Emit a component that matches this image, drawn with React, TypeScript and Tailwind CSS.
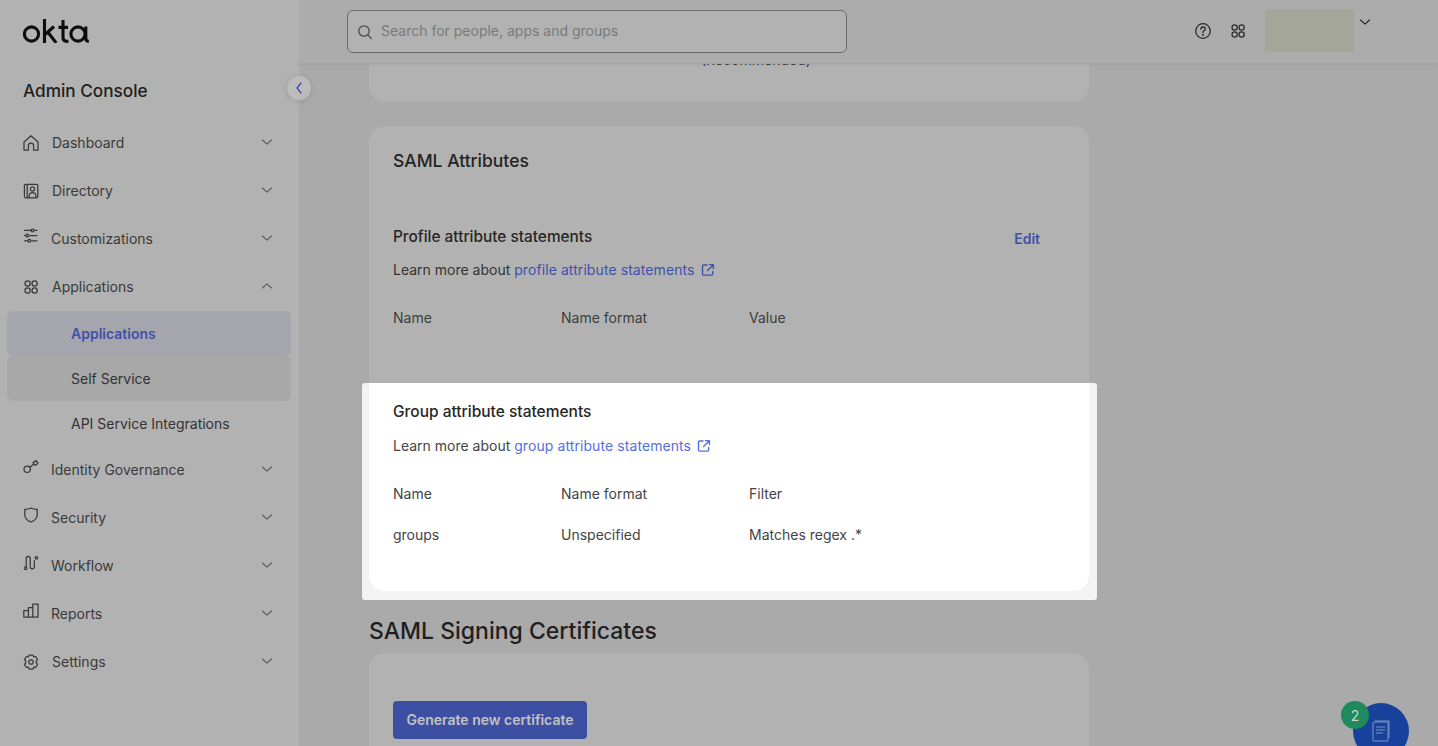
import React from "react";

const I = ({ children, className = "" }: { children: React.ReactNode; className?: string }) => (
  <svg viewBox="0 0 16 16" fill="none" stroke="currentColor" strokeWidth="1.25" strokeLinecap="round" strokeLinejoin="round" className={`w-4 h-4 shrink-0 ${className}`}>
    {children}
  </svg>
);

const Chevron = ({ up = false, className = "" }: { up?: boolean; className?: string }) => (
  <svg viewBox="0 0 12 8" fill="none" stroke="currentColor" strokeWidth="1.1" strokeLinecap="round" strokeLinejoin="round" className={`w-[12px] h-[8px] ${className}`}>
    <path d={up ? "M1.5 6 L6 1.8 L10.5 6" : "M1.5 2 L6 6.2 L10.5 2"} />
  </svg>
);

const FourCircles = ({ className = "" }: { className?: string }) => (
  <I className={className}>
    <circle cx="4.6" cy="4.4" r="2.6" />
    <circle cx="11.6" cy="4.4" r="2.6" />
    <circle cx="4.6" cy="11.4" r="2.6" />
    <circle cx="11.6" cy="11.4" r="2.6" />
  </I>
);

const Ext = ({ className = "" }: { className?: string }) => (
  <svg viewBox="0 0 14 14" fill="none" stroke="currentColor" strokeWidth="1.4" strokeLinecap="round" strokeLinejoin="round" className={`w-[14px] h-[14px] ${className}`}>
    <path d="M6 2 H2.6 Q1.5 2 1.5 3.1 V11 Q1.5 12.1 2.6 12.1 H10.6 Q11.7 12.1 11.7 11 V8.4" />
    <path d="M8.4 1.6 H12.4 V5.6 M12.2 1.8 L6.6 7.4" />
  </svg>
);

const items: { label: string; icon: React.ReactNode; up?: boolean; textClass: string }[] = [
  {
    label: "Dashboard",
    textClass: "ml-[13px]",
    icon: (
      <I>
        <path d="M1 7 L8 0.8 L15 7 V15 H10.6 V10.6 Q10.6 8 8 8 Q5.4 8 5.4 10.6 V15 H1 Z" />
      </I>
    ),
  },
  {
    label: "Directory",
    textClass: "ml-[13px]",
    icon: (
      <I>
        <rect x="1.4" y="1.4" width="13.4" height="13.4" rx="1.2" />
        <path d="M4.2 1.6 V14.6" />
        <circle cx="9.5" cy="6" r="2.1" />
        <path d="M6.2 14.4 V12.6 Q6.2 9.6 9.5 9.6 Q12.8 9.6 12.8 12.6 V14.4" />
      </I>
    ),
  },
  {
    label: "Customizations",
    textClass: "ml-[12px]",
    icon: (
      <I className="-translate-y-[3px]">
        <path d="M10.8 2.4 H14 M1.6 2.4 H8 M1.6 7.6 H2.8 M5.6 7.6 H14 M8.8 12.8 H14 M1.6 12.8 H5" />
        <circle cx="9.4" cy="2.4" r="1.4" />
        <circle cx="4.2" cy="7.6" r="1.4" />
        <circle cx="6.4" cy="12.8" r="1.4" />
      </I>
    ),
  },
  { label: "Applications", up: true, textClass: "ml-[13px]", icon: <FourCircles /> },
  {
    label: "Identity Governance",
    textClass: "ml-[12px]",
    icon: (
      <I className="-translate-y-[3px]">
        <circle cx="4.2" cy="10.2" r="3.2" />
        <path d="M6.8 8.2 L10.6 5.2 M10 3.6 L13.2 1.6 L15 4.2 L12 6.4 Z" />
      </I>
    ),
  },
  {
    label: "Security",
    textClass: "ml-[12px]",
    icon: (
      <I className="-translate-y-[3px]">
        <path d="M8 1 Q11 2.6 14.2 2.4 V8 Q14.2 12.6 8 15 Q1.8 12.6 1.8 8 V2.4 Q5 2.6 8 1 Z" />
      </I>
    ),
  },
  {
    label: "Workflow",
    textClass: "ml-[12px]",
    icon: (
      <I className="-translate-y-[3px]">
        <circle cx="2.6" cy="13.2" r="1.3" />
        <circle cx="13.4" cy="2.8" r="1.3" />
        <path d="M3.2 11.4 V4 Q3.2 1.4 5.2 1.4 Q7.2 1.4 7.2 4 V11.4 Q7.2 13.8 9.2 13.8 Q11.4 13.8 11.4 11.4 V5.6" />
      </I>
    ),
  },
  {
    label: "Reports",
    textClass: "ml-[12px]",
    icon: (
      <I className="-translate-y-[3px]">
        <path d="M0.8 7.6 H5.4 V14 H0.8 Z M5.4 4.6 H9.8 V14 H5.4 Z M9.8 1 H15 V14 H9.8 Z" />
      </I>
    ),
  },
  {
    label: "Settings",
    textClass: "ml-[13px]",
    icon: (
      <I>
        <circle cx="8" cy="8" r="2.2" />
        <path d="M6.2 1 H9.8 L10.6 2.8 L12.6 2.5 L14.6 5.6 L13.3 7.1 V8.9 L14.6 10.4 L12.6 13.5 L10.6 13.2 L9.8 15 H6.2 L5.4 13.2 L3.4 13.5 L1.4 10.4 L2.7 8.9 V7.1 L1.4 5.6 L3.4 2.5 L5.4 2.8 Z" />
      </I>
    ),
  },
];

const Row = ({ item }: { item: (typeof items)[number] }) => (
  <div className="h-[48px] flex items-center pl-[23px] pr-[26px] text-[#3a3a3a]">
    {item.icon}
    <span className={`${item.textClass} pb-[2px] flex-1 text-[14px]`}>{item.label}</span>
    <Chevron up={item.up} className="text-[#5c5c5c] -translate-y-[1px]" />
  </div>
);

const Sidebar = () => (
  <aside className="w-[299px] shrink-0 h-full bg-[#b2b2b2] flex flex-col relative z-20">
    <div className="pl-[23px] pt-[19px] h-[72px]">
      <svg viewBox="0 0 66 24" className="w-[66px] h-[24px]" fill="none" stroke="#0d0d0d" strokeWidth="3.1">
        <circle cx="8.5" cy="15" r="7.1" />
        <path d="M21.5 0 V24 M22 15.5 L31 7.5 M25 13.2 L33.2 24" />
        <path d="M40 1 V18.5 Q40 22.4 44 22.4 H45.4 M35.5 8.4 H45" />
        <circle cx="55" cy="15" r="7.1" />
        <path d="M62.8 7.4 V19.6 Q62.8 22.4 65.8 22.4" />
      </svg>
    </div>
    <div className="pl-[23px] h-[38px] flex items-center text-[17.2px] font-medium text-[#1f1f1f] leading-none">Admin Console</div>
    <div className="mt-[9px]">
      {items.slice(0, 4).map((it) => <Row key={it.label} item={it} />)}
    </div>
    <div className="pl-[7px]">
      <div className="w-[284px] h-[45px] rounded-[6px] bg-[#a5a5ad] pl-[64px] flex items-center text-[14px] font-semibold text-[#3f51ab]">Applications</div>
      <div className="w-[284px] h-[45px] rounded-[6px] bg-[#a8a8a8] pl-[64px] flex items-center text-[14px] text-[#333333]">Self Service</div>
      <div className="h-[45px] pl-[64px] flex items-center text-[14px] text-[#333333]">API Service Integrations</div>
    </div>
    <div>
      {items.slice(4).map((it) => <Row key={it.label} item={it} />)}
    </div>
    <button className="absolute left-[287px] top-[76px] w-[24px] h-[24px] rounded-full bg-[#bcbcbc] shadow-[0_1px_6px_rgba(0,0,0,0.12)] flex items-center justify-center text-[#3f51ab]">
      <svg viewBox="0 0 8 12" fill="none" stroke="currentColor" strokeWidth="1.4" strokeLinecap="round" strokeLinejoin="round" className="w-[8px] h-[12px]">
        <path d="M6 1 L2 6 L6 11" />
      </svg>
    </button>
  </aside>
);

const Header = () => (
  <header className="h-[64px] shrink-0 bg-[#acacac] border-b border-[#a2a2a2] shadow-[0_1px_3px_rgba(0,0,0,0.06)] relative z-10 flex items-start pl-[48px]">
    <div className="mt-[10px] w-[500px] h-[43px] rounded-[6px] border border-[#6b6b6b] bg-[#b2b2b2] flex items-center pl-[9px]">
      <svg viewBox="0 0 16 16" fill="none" stroke="#4c4c4c" strokeWidth="1.3" strokeLinecap="round" className="w-[16px] h-[16px]">
        <circle cx="7" cy="7" r="5.2" />
        <path d="M11 11 L14.4 14.6" />
      </svg>
      <span className="ml-[8px] pb-[2px] text-[14px] text-[#7a7a7a]">Search for people, apps and groups</span>
    </div>
    <div className="ml-[348px] mt-[23px] text-[#2c2c2c] flex items-center">
      <svg viewBox="0 0 16 16" fill="none" stroke="currentColor" strokeWidth="1.3" strokeLinecap="round" className="w-[16px] h-[16px]">
        <circle cx="8" cy="8" r="7.3" />
        <path d="M5.9 6.2 Q5.9 4 8 4 Q10.2 4 10.2 6 Q10.2 7.2 8.9 7.9 Q8 8.4 8 9.6" />
        <circle cx="8" cy="11.8" r="0.4" />
      </svg>
      <FourCircles className="ml-[19px]" />
    </div>
    <div className="ml-[19px] mt-[9px] w-[89px] h-[43px] bg-[#a5a69a]" />
    <Chevron className="ml-[5px] mt-[18px] text-[#222222]" />
  </header>
);

const Col = ({ a, b, c, className = "" }: { a: string; b: string; c: string; className?: string }) => (
  <div className={`grid grid-cols-[168px_188px_1fr] ${className}`}>
    <span>{a}</span>
    <span>{b}</span>
    <span>{c}</span>
  </div>
);

const Main = () => (
  <main className="flex-1 min-w-0 h-full bg-[#aaaaaa] flex flex-col relative overflow-hidden">
    <Header />
    <div className="pl-[70px] w-[790px]">
      <section className="-mt-[24px] h-[62px] rounded-b-[16px] bg-[#b2b2b2] pt-[12px] pl-[332px] text-[14px] leading-[16px] text-[#3d3d3d]">(Recommended)</section>

      <section className="mt-[24px] h-[465px] rounded-[16px] bg-[#b2b2b2] flex flex-col">
        <h2 className="ml-[24px] mt-[24px] text-[17.5px] leading-[22px] font-medium text-[#242424]">SAML Attributes</h2>
        <div className="ml-[24px] mr-[49px] mt-[54px] flex items-center justify-between">
          <h3 className="text-[15.4px] leading-[22px] font-medium text-[#262626]">Profile attribute statements</h3>
          <span className="text-[14px] font-semibold text-[#3f51ab] translate-y-[1px]">Edit</span>
        </div>
        <p className="ml-[24px] mt-[12px] text-[14px] leading-[20px] text-[#333333] flex items-center">
          Learn more about&nbsp;<span className="text-[#3f51ab] tracking-[0.08px]">profile attribute statements</span>
          <Ext className="ml-[6px] text-[#3f51ab]" />
        </p>
        <Col a="Name" b="Name format" c="Value" className="ml-[24px] mt-[28px] text-[14px] leading-[20px] text-[#3d3d3d]" />

        <div className="-ml-[7px] w-[735px] h-[217px] shrink-0 mt-[55px] rounded-[3px] bg-[#f3f3f3]">
          <div className="ml-[7px] w-[720px] h-[208px] rounded-b-[16px] bg-white pl-[24px] pt-[18px]">
            <h3 className="text-[15.5px] leading-[22px] font-medium text-[#262626]">Group attribute statements</h3>
            <p className="mt-[13px] text-[14px] leading-[20px] text-[#444444] flex items-center">
              Learn more about&nbsp;<span className="text-[#546fe0] tracking-[0.08px]">group attribute statements</span>
              <Ext className="ml-[6px] text-[#546fe0]" />
            </p>
            <Col a="Name" b="Name format" c="Filter" className="mt-[28px] text-[14px] leading-[20px] text-[#444444]" />
            <Col a="groups" b="Unspecified" c="Matches regex .*" className="mt-[21px] text-[14px] leading-[20px] text-[#444444]" />
          </div>
        </div>
      </section>

      <h2 className="mt-[24px] text-[23px] leading-[32px] font-medium text-[#1f1f1f]">SAML Signing Certificates</h2>
      <section className="mt-[6px] h-[140px] rounded-t-[16px] bg-[#b2b2b2] pl-[24px] pt-[48px]">
        <button className="w-[194px] h-[38px] pb-[2px] rounded-[4px] bg-[#3d4fa3] text-[14px] font-semibold text-[#c2c2c2]">Generate new certificate</button>
      </section>
    </div>
  </main>
);

export default function App() {
  return (
    <div className="w-[1438px] h-[746px] flex overflow-hidden relative font-['Inter',sans-serif]">
      <Sidebar />
      <Main />
      <div className="absolute left-[1353px] top-[703px] w-[56px] h-[56px] rounded-full bg-[#17419a] flex items-start justify-center pt-[17px] text-[#7f97c9]">
        <svg viewBox="0 0 18 22" fill="none" stroke="currentColor" strokeWidth="1" className="w-[18px] h-[22px]">
          <rect x="1" y="2" width="15" height="19" rx="1" />
          <path d="M3 1 H17 V18 M4 7 H13 M4 10 H13 M4 13 H11" />
        </svg>
      </div>
      <div className="absolute left-[1341px] top-[701px] w-[28px] h-[28px] rounded-full bg-[#1e8a5e] flex items-center justify-center text-[14px] text-[#c8d8d0]">2</div>
    </div>
  );
}
